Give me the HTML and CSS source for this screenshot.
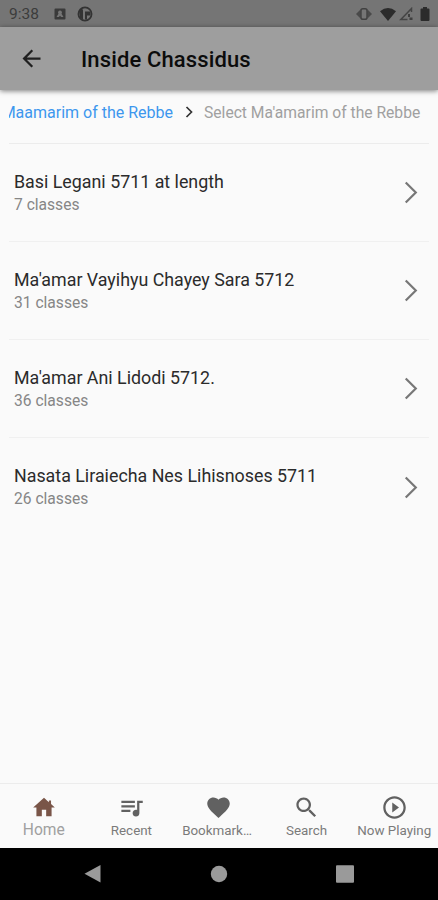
FILE: index.html
```html
<!DOCTYPE html>
<html lang="en">
<head>
<meta charset="utf-8">
<title>Inside Chassidus</title>
<link rel="stylesheet" href="styles.css">
</head>
<body>
<div class="app">
  <div class="status">
    <span class="time">9:38</span>
    <svg class="s-app" width="12" height="12" viewBox="0 0 12 12"><path fill="#3a3a3a" fill-rule="evenodd" d="M1.500.500h9q1 0 1 1v9q0 1-1 1h-9q-1 0-1-1v-9q0-1 1-1zM6 2.500a2 2 0 0 0-1.500 3.300L2.500 9h2.300L6 7.800 7.200 9h2.300l-2-3.200A2 2 0 0 0 6 2.500z"/></svg>
    <svg class="s-circle" width="16" height="16" viewBox="0 0 16 16"><circle cx="8" cy="8" r="6.600" fill="none" stroke="#333" stroke-width="1.700"/><path fill="#333" d="M2 5 5 2l1 2.500v9L3 12zM8 5.500h5.500v4H10v4H8z"/></svg>
    <span class="spacer"></span>
    <svg class="s-vib" width="16" height="14" viewBox="0 0 16 14"><rect x="4.900" y="1.700" width="6.200" height="10.600" rx="2" fill="none" stroke="#414141" stroke-width="1.600"/><path fill="#4a4a4a" d="M4 3v8L0 7zM12 3v8l4-4z"/></svg>
    <svg class="s-wifi" width="16" height="13" viewBox="0 0 16 13"><path fill="#2b2b2b" d="M8 13 0 3.200Q8-3.200 16 3.200z"/></svg>
    <svg class="s-cell" width="14" height="14" viewBox="0 0 14 14"><path fill="none" stroke="#444" stroke-width="1.500" d="M12.500 5V1.500L1.800 12.500h6.700"/><path fill="#3f3f3f" d="M9 7h2v3H9zM10.500 10.500h3V13h-3z"/></svg>
    <svg class="s-batt" width="10" height="14" viewBox="0 0 10 14"><path fill="#2b2b2b" d="M3 0h4v1.500h1.500q1 0 1 1V13q0 1-1 1h-7q-1 0-1-1V2.500q0-1 1-1H3z"/></svg>
  </div>
  <header class="bar">
    <svg class="back" viewBox="0 0 24 24"><path fill="#202020" d="M20 11H7.830l5.590-5.590L12 4l-8 8 8 8 1.410-1.410L7.830 13H20v-2z"/></svg>
    <h1>Inside Chassidus</h1>
  </header>
  <main>
    <div class="crumbs">
      <span class="prev"><span>Maamarim of the Rebbe</span></span>
      <svg class="sep" width="8" height="12" viewBox="0 0 8 12"><path d="M1.500 1 6.500 6l-5 5" fill="none" stroke="#333" stroke-width="1.700"/></svg>
      <span class="here">Select Ma'amarim of the Rebbe</span>
    </div>
    <div class="row"><div><div class="t">Basi Legani 5711 at length</div><div class="n">7 classes</div></div><svg class="chev" viewBox="0 0 14 24"><path d="M1.500 1.500 12 12 1.500 22.500"/></svg></div>
    <div class="row"><div><div class="t">Ma'amar Vayihyu Chayey Sara 5712</div><div class="n">31 classes</div></div><svg class="chev" viewBox="0 0 14 24"><path d="M1.500 1.500 12 12 1.500 22.500"/></svg></div>
    <div class="row"><div><div class="t">Ma'amar Ani Lidodi 5712.</div><div class="n">36 classes</div></div><svg class="chev" viewBox="0 0 14 24"><path d="M1.500 1.500 12 12 1.500 22.500"/></svg></div>
    <div class="row"><div><div class="t">Nasata Liraiecha Nes Lihisnoses 5711</div><div class="n">26 classes</div></div><svg class="chev" viewBox="0 0 14 24"><path d="M1.500 1.500 12 12 1.500 22.500"/></svg></div>
  </main>
  <nav class="tabs">
    <div class="tab on"><svg viewBox="0 0 24 24"><path d="M18.500 8.850V5.500h-2v1.550L12 3 2 12h3v8h5v-6h4v6h5v-8h3z"/></svg><span>Home</span></div>
    <div class="tab"><svg viewBox="0 0 24 24"><path d="M15 6H3v2h12V6zm0 4H3v2h12v-2zM3 16h8v-2H3v2zM17 6v8.180c-.310-.110-.650-.180-1-.180-1.660 0-3 1.340-3 3s1.340 3 3 3 3-1.340 3-3V8h3V6h-5z"/></svg><span>Recent</span></div>
    <div class="tab"><svg viewBox="0 0 24 24"><path d="M12 21.350l-1.450-1.320C5.400 15.360 2 12.280 2 8.500 2 5.420 4.420 3 7.500 3c1.740 0 3.410.810 4.500 2.090C13.090 3.810 14.760 3 16.500 3 19.580 3 22 5.420 22 8.500c0 3.780-3.400 6.860-8.550 11.540L12 21.350z"/></svg><span class="bm">Bookmark…</span></div>
    <div class="tab"><svg viewBox="0 0 24 24"><path d="M15.500 14h-.790l-.280-.270C15.410 12.590 16 11.110 16 9.500 16 5.910 13.090 3 9.500 3S3 5.910 3 9.500 5.910 16 9.500 16c1.610 0 3.090-.590 4.230-1.570l.270.280v.790l5 4.990L20.490 19l-4.990-5zm-6 0C7.010 14 5 11.990 5 9.500S7.010 5 9.500 5 14 7.010 14 9.500 11.990 14 9.500 14z"/></svg><span>Search</span></div>
    <div class="tab"><svg viewBox="0 0 24 24"><path d="M10 16.500l6-4.500-6-4.500v9zM12 2C6.480 2 2 6.480 2 12s4.480 10 10 10 10-4.480 10-10S17.520 2 12 2zm0 18c-4.410 0-8-3.590-8-8s3.590-8 8-8 8 3.590 8 8-3.590 8-8 8z"/></svg><span>Now Playing</span></div>
  </nav>
  <div class="system">
    <svg viewBox="0 0 18 20"><path d="M16.500 1v17.500L.5 9.800z"/></svg>
    <svg viewBox="0 0 18 20"><circle cx="9" cy="10" r="8.200"/></svg>
    <svg viewBox="0 0 18 20"><rect x="0" y="1.200" width="18" height="17.600" rx="1"/></svg>
  </div>
</div>
</body>
</html>
```
FILE: styles.css
```css
* { box-sizing: border-box; }
body { margin: 0; font-family: Roboto, sans-serif; background: #fafafa; }
.app { width: 438px; height: 900px; display: flex; flex-direction: column; overflow: hidden; white-space: nowrap; }
svg { display: block; flex: none; }

.status { height: 27px; flex: none; background: #757575; display: flex; align-items: center; padding: 1px 8px 0 9px; }
.time { font-size: 15.5px; color: #3c3c3c; width: 45px; }
.s-circle { margin-left: 11px; }
.spacer { flex: 1; }
.s-wifi { margin-left: 8px; }
.s-cell { margin-left: 3px; }
.s-batt { margin-left: 7px; }

.bar { height: 63px; flex: none; background: #9e9e9e; display: flex; align-items: center; padding-left: 18px; box-shadow: 0 1px 5px rgba(0,0,0,.5); z-index: 1; }
.back { width: 27px; height: 27px; }
.bar h1 { margin: 2px 0 0 36px; font-size: 22px; font-weight: 500; color: #0c0c0c; letter-spacing: .13px; }

main { flex: 1; padding: 0 9px; }
.crumbs { height: 54px; display: flex; align-items: center; padding-bottom: 9px; border-bottom: 1px solid #ececec; font-size: 16px; }
.prev { width: 164px; display: flex; justify-content: flex-end; overflow: hidden; color: #3d97ee; }
.sep { margin: 0 11px 0 12px; }
.here { color: #a0a0a0; font-size: 15.650px; }
.row { height: 98px; display: flex; justify-content: space-between; align-items: center; padding: 0 11px 0 5px; border-bottom: 1px solid #f0f0f0; }
.row:last-child { border-bottom: 0; }
.t { font-size: 17.840px; line-height: 24px; color: #2b2b2b; }
.n { font-size: 15.600px; line-height: 22px; color: #868686; }
.chev { width: 14px; height: 23px; margin-bottom: 0; fill: none; stroke: #777; stroke-width: 2.300; }

.tabs { height: 65px; flex: none; display: grid; grid-template-columns: repeat(5, 1fr); border-top: 1px solid #ececec; }
.tab { display: flex; flex-direction: column; align-items: center; padding-top: 9.500px; color: #7a7a7a; font-size: 13.400px; line-height: 18px; }
.tab svg { width: 27px; height: 27px; fill: #616161; }
.tab span { margin-top: 1px; }
.tab .bm { margin-right: 4px; }
.on { color: #a0a0a0; font-size: 15.600px; }
.on svg { width: 26px; fill: #795548; }
.on span { margin-top: 0; }

.system { height: 52px; flex: none; background: #000; display: flex; justify-content: center; gap: 108px; align-items: center; }
.system svg { width: 18px; height: 20px; fill: #9a9a9a; }
```
